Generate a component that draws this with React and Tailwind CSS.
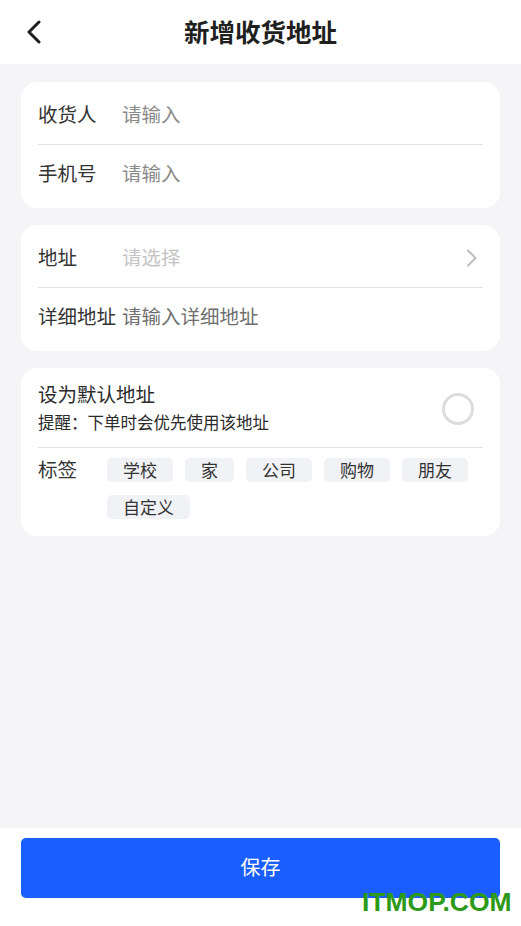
// New shipping address form (mobile)
const TAGS = ['学校', '家', '公司', '购物', '朋友', '自定义'];

function BackIcon() {
  return (
    <svg width="18" height="24" viewBox="0 0 18 24" fill="none">
      <path d="M14 2 L4 12 L14 22" stroke="#1f1f1f" strokeWidth="3" strokeLinecap="round" strokeLinejoin="round" />
    </svg>
  );
}

function ChevronRight() {
  return (
    <svg width="12" height="18" viewBox="0 0 12 18" fill="none">
      <path d="M2 1.5 L9.5 9 L2 16.5" stroke="#bdbdbd" strokeWidth="2" strokeLinecap="round" strokeLinejoin="round" />
    </svg>
  );
}

function Divider() {
  return <div className="h-px bg-[#e3e3e3]" />;
}

export default function App() {
  return (
    <div
      className="relative min-h-[926px] flex flex-col bg-[#f5f5f7] text-[#333]"
      style={{ fontFamily: '"Noto Sans CJK SC", "Noto Sans", sans-serif' }}
    >
      {/* Header */}
      <div className="h-[64px] bg-white flex items-center relative">
        <div className="pl-[25px] flex items-center">
          <BackIcon />
        </div>
        <div className="absolute inset-0 pb-[2px] flex items-center justify-center pointer-events-none">
          <span className="text-[25.5px] font-bold text-[#1f1f1f] leading-none">新增收货地址</span>
        </div>
      </div>

      <div className="px-[21px] pt-[18px] flex flex-col gap-[17px]">
        {/* Contact card */}
        <div className="bg-white rounded-[16px] px-[17px]">
          <div className="h-[62px] pt-[2px] flex items-center text-[19.5px]">
            <span className="w-[84px] shrink-0">收货人</span>
            <span className="text-[#8a8a8a]">请输入</span>
          </div>
          <Divider />
          <div className="h-[63px] pb-[8px] flex items-center text-[19.5px]">
            <span className="w-[84px] shrink-0">手机号</span>
            <span className="text-[#8a8a8a]">请输入</span>
          </div>
        </div>

        {/* Address card */}
        <div className="bg-white rounded-[16px] px-[17px]">
          <div className="h-[62px] pt-[2px] flex items-center text-[19.5px]">
            <span className="w-[84px] shrink-0">地址</span>
            <span className="text-[#c4c4c4] flex-1">请选择</span>
            <span className="pr-[5px] pt-[2px] flex items-center"><ChevronRight /></span>
          </div>
          <Divider />
          <div className="h-[63px] pb-[8px] flex items-center text-[19.5px]">
            <span className="w-[84px] shrink-0">详细地址</span>
            <span className="text-[#6f6f6f]">请输入详细地址</span>
          </div>
        </div>

        {/* Default & tags card */}
        <div className="bg-white rounded-[16px] px-[17px]">
          <div className="flex items-center pt-[15px] pb-[14px]">
            <div className="flex-1">
              <div className="text-[19.5px] leading-[22px] text-[#2a2a2a]">设为默认地址</div>
              <div className="mt-[6px] text-[16.5px] leading-[22px] text-[#2a2a2a]">提醒：下单时会优先使用该地址</div>
            </div>
            <div className="w-[32px] h-[32px] rounded-full border-[3px] border-[#dcdcdc] mr-[9px] mt-[2px]" />
          </div>
          <Divider />
          <div className="flex pt-[10px] pb-[17px]">
            <span className="w-[69px] shrink-0 h-[22px] flex items-center text-[19.5px]">标签</span>
            <div className="flex flex-wrap gap-x-[12px] gap-y-[13px]">
              {TAGS.map((t) => (
                <span
                  key={t}
                  className="h-[24px] px-[16px] pb-[1px] rounded-[5px] bg-[#f1f2f6] flex items-center text-[17px] text-[#333]"
                >
                  {t}
                </span>
              ))}
            </div>
          </div>
        </div>
      </div>

      <div className="flex-1" />

      {/* Footer */}
      <div className="bg-white pt-[10px] pb-[28px] px-[21px]">
        <button className="w-full h-[60px] pb-[2px] rounded-[5px] bg-[#1a5eff] text-white text-[20px] flex items-center justify-center">
          保存
        </button>
      </div>

      {/* Watermark */}
      <div
        className="absolute left-[362px] top-[889px] text-[26.5px] font-bold text-[#2c9a18] leading-none"
        style={{ fontFamily: '"Liberation Sans", Arial, sans-serif' }}
      >
        ITMOP.COM
      </div>
    </div>
  );
}
